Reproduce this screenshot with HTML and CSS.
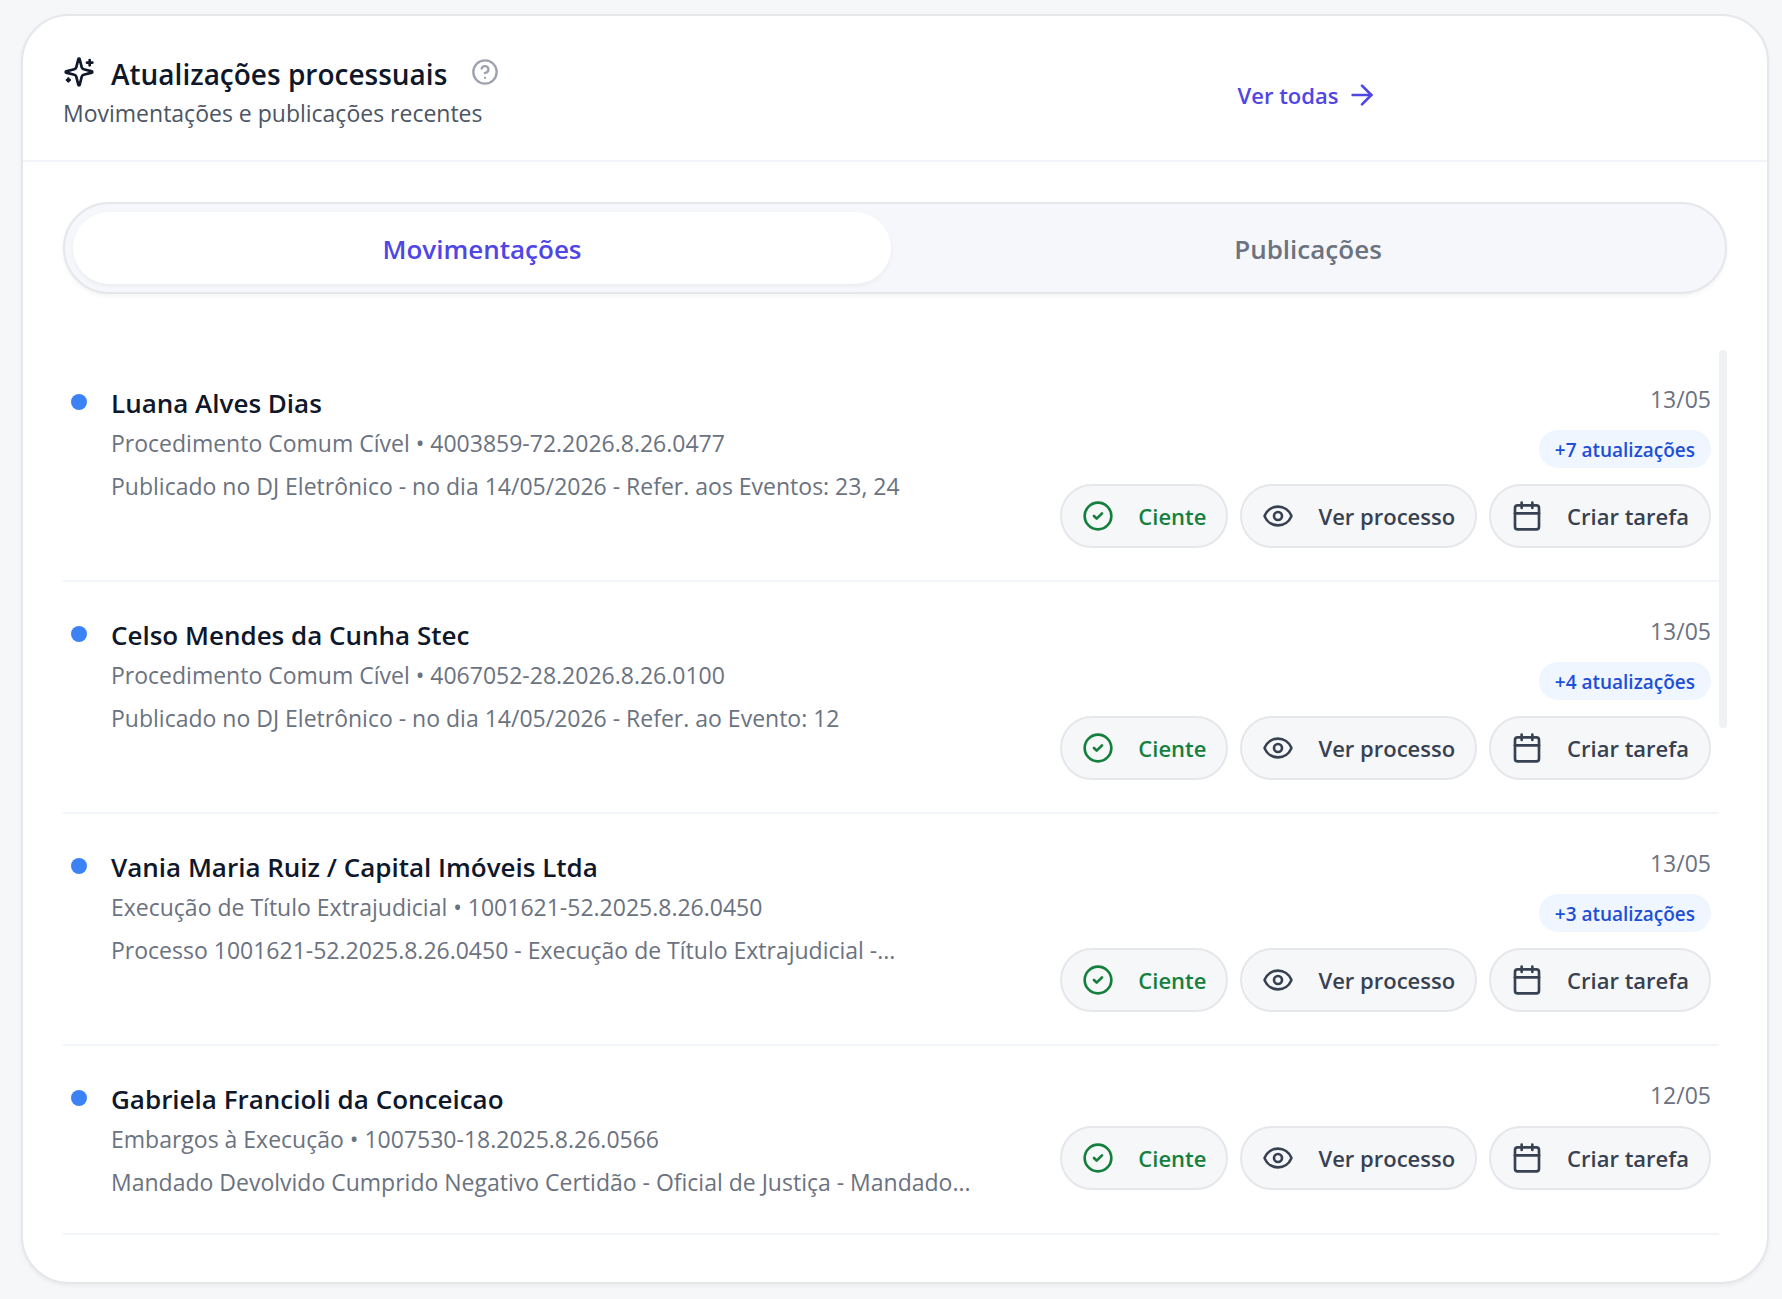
FILE: index.html
```html
<!DOCTYPE html>
<html lang="pt-BR">
<head>
  <meta charset="UTF-8">
  <meta name="viewport" content="width=device-width, initial-scale=1.0">
  <title>Atualizações processuais</title>
  <link rel="stylesheet" href="styles.css">
</head>
<body>
  <!-- Shared icons -->
  <svg class="sprite" aria-hidden="true">
    <symbol id="icon-check" viewBox="0 0 24 24">
      <circle cx="12" cy="12" r="10"/>
      <path d="m9 12 2 2 4-4"/>
    </symbol>
    <symbol id="icon-eye" viewBox="0 0 24 24">
      <path d="M2.062 12.348a1 1 0 0 1 0-.696 10.75 10.75 0 0 1 19.876 0 1 1 0 0 1 0 .696 10.75 10.75 0 0 1-19.876 0"/>
      <circle cx="12" cy="12" r="3"/>
    </symbol>
    <symbol id="icon-calendar" viewBox="0 0 24 24">
      <path d="M8 2v4"/>
      <path d="M16 2v4"/>
      <rect x="3" y="4" width="18" height="18" rx="2"/>
      <path d="M3 10h18"/>
    </symbol>
  </svg>

  <main class="card">
    <header class="card-header">
      <div>
        <div class="title-row">
          <svg class="icon" viewBox="0 0 24 24" aria-hidden="true">
            <path d="M9.937 15.5A2 2 0 0 0 8.5 14.063l-6.135-1.582a.5.5 0 0 1 0-.962L8.5 9.936A2 2 0 0 0 9.937 8.5l1.582-6.135a.5.5 0 0 1 .963 0L14.063 8.5A2 2 0 0 0 15.5 9.937l6.135 1.581a.5.5 0 0 1 0 .964L15.5 14.063a2 2 0 0 0-1.437 1.437l-1.582 6.135a.5.5 0 0 1-.963 0z"/>
            <path d="M20 3v4"/>
            <path d="M22 5h-4"/>
            <path d="M4 17v2"/>
            <path d="M5 18H3"/>
          </svg>
          <h1 class="title">Atualizações processuais</h1>
          <button class="help" type="button" aria-label="Ajuda">
            <svg class="icon icon-small" viewBox="0 0 24 24" aria-hidden="true">
              <circle cx="12" cy="12" r="10"/>
              <path d="M9.09 9a3 3 0 0 1 5.83 1c0 2-3 3-3 3"/>
              <path d="M12 17h.01"/>
            </svg>
          </button>
        </div>
        <p class="subtitle">Movimentações e publicações recentes</p>
      </div>
      <a class="see-all" href="#">
        Ver todas
        <svg class="icon" viewBox="0 0 24 24" aria-hidden="true">
          <path d="M5 12h14"/>
          <path d="m12 5 7 7-7 7"/>
        </svg>
      </a>
    </header>

    <div class="card-body">
      <div class="tabs" role="tablist">
        <button class="tab active" type="button" role="tab" aria-selected="true">Movimentações</button>
        <button class="tab" type="button" role="tab" aria-selected="false">Publicações</button>
      </div>

      <div class="scroll-area">
        <ul class="list">
          <li class="item">
            <span class="dot"></span>
            <div class="info">
              <h2 class="name">Luana Alves Dias</h2>
              <p class="meta">Procedimento Comum Cível • 4003859-72.2026.8.26.0477</p>
              <p class="desc">Publicado no DJ Eletrônico - no dia 14/05/2026 - Refer. aos Eventos: 23, 24</p>
            </div>
            <div class="side">
              <span class="date">13/05</span>
              <span class="badge">+7 atualizações</span>
              <div class="actions">
                <button class="action done" type="button"><svg class="icon" aria-hidden="true"><use href="#icon-check"/></svg>Ciente</button>
                <button class="action" type="button"><svg class="icon" aria-hidden="true"><use href="#icon-eye"/></svg>Ver processo</button>
                <button class="action" type="button"><svg class="icon" aria-hidden="true"><use href="#icon-calendar"/></svg>Criar tarefa</button>
              </div>
            </div>
          </li>
          <li class="item">
            <span class="dot"></span>
            <div class="info">
              <h2 class="name">Celso Mendes da Cunha Stec</h2>
              <p class="meta">Procedimento Comum Cível • 4067052-28.2026.8.26.0100</p>
              <p class="desc">Publicado no DJ Eletrônico - no dia 14/05/2026 - Refer. ao Evento: 12</p>
            </div>
            <div class="side">
              <span class="date">13/05</span>
              <span class="badge">+4 atualizações</span>
              <div class="actions">
                <button class="action done" type="button"><svg class="icon" aria-hidden="true"><use href="#icon-check"/></svg>Ciente</button>
                <button class="action" type="button"><svg class="icon" aria-hidden="true"><use href="#icon-eye"/></svg>Ver processo</button>
                <button class="action" type="button"><svg class="icon" aria-hidden="true"><use href="#icon-calendar"/></svg>Criar tarefa</button>
              </div>
            </div>
          </li>
          <li class="item">
            <span class="dot"></span>
            <div class="info">
              <h2 class="name">Vania Maria Ruiz / Capital Imóveis Ltda</h2>
              <p class="meta">Execução de Título Extrajudicial • 1001621-52.2025.8.26.0450</p>
              <p class="desc">Processo 1001621-52.2025.8.26.0450 - Execução de Título Extrajudicial -...</p>
            </div>
            <div class="side">
              <span class="date">13/05</span>
              <span class="badge">+3 atualizações</span>
              <div class="actions">
                <button class="action done" type="button"><svg class="icon" aria-hidden="true"><use href="#icon-check"/></svg>Ciente</button>
                <button class="action" type="button"><svg class="icon" aria-hidden="true"><use href="#icon-eye"/></svg>Ver processo</button>
                <button class="action" type="button"><svg class="icon" aria-hidden="true"><use href="#icon-calendar"/></svg>Criar tarefa</button>
              </div>
            </div>
          </li>
          <li class="item">
            <span class="dot"></span>
            <div class="info">
              <h2 class="name">Gabriela Francioli da Conceicao</h2>
              <p class="meta">Embargos à Execução • 1007530-18.2025.8.26.0566</p>
              <p class="desc">Mandado Devolvido Cumprido Negativo Certidão - Oficial de Justiça - Mandado...</p>
            </div>
            <div class="side">
              <span class="date">12/05</span>
              <div class="actions">
                <button class="action done" type="button"><svg class="icon" aria-hidden="true"><use href="#icon-check"/></svg>Ciente</button>
                <button class="action" type="button"><svg class="icon" aria-hidden="true"><use href="#icon-eye"/></svg>Ver processo</button>
                <button class="action" type="button"><svg class="icon" aria-hidden="true"><use href="#icon-calendar"/></svg>Criar tarefa</button>
              </div>
            </div>
          </li>
        </ul>
        <div class="scrollbar"><div class="scrollbar-thumb"></div></div>
      </div>
    </div>
  </main>
</body>
</html>
```

FILE: styles.css
```css
* {
  box-sizing: border-box;
}
body {
  margin: 0;
  padding: 14px 13px 15px 21px;
  background: #f6f7f9;
  color: #0f172a;
  font-family: "Segoe UI", "Open Sans", "Noto Sans", sans-serif;
  font-size: 23px;
  line-height: 34px;
}
h1,
h2,
p,
ul {
  margin: 0;
  padding: 0;
}
button {
  font: inherit;
  cursor: pointer;
}
.sprite {
  display: none;
}
.icon {
  width: 32px;
  height: 32px;
  flex-shrink: 0;
  fill: none;
  stroke: currentColor;
  stroke-width: 2;
  stroke-linecap: round;
  stroke-linejoin: round;
}
.icon-small {
  width: 28px;
  height: 28px;
}

.card {
  background: #fff;
  border: 2px solid #e5e7eb;
  border-radius: 48px;
  box-shadow: 0 2px 4px rgba(0, 0, 0, 0.05);
}
.card-header {
  display: grid;
  grid-template-columns: 12fr 5fr;
  padding: 32px 40px 30px;
  border-bottom: 2px solid #f1f5f9;
}
.title-row {
  display: flex;
  align-items: center;
  gap: 16px;
}
.title {
  padding-top: 4px;
  font-size: 28px;
  font-weight: 600;
  line-height: 44px;
}
.help {
  display: flex;
  margin-left: 8px;
  padding: 0;
  border: 0;
  background: none;
  color: #9ca3af;
}
.subtitle {
  color: #4b5563;
}
.see-all {
  display: flex;
  align-items: center;
  gap: 8px;
  padding-top: 12px;
  color: #4f46e5;
  font-size: 22px;
  font-weight: 600;
  text-decoration: none;
}

.card-body {
  padding: 40px 40px 47px;
}
.tabs {
  display: flex;
  gap: 8px;
  padding: 8px;
  border: 2px solid #e5e7eb;
  border-radius: 46px;
  background: #f5f7fb;
  box-shadow: 0 2px 4px rgba(0, 0, 0, 0.05);
}
.tab {
  flex: 1;
  height: 72px;
  padding: 2px 0 0;
  border: 0;
  border-radius: 36px;
  background: transparent;
  color: #6b7280;
  font-size: 26px;
  font-weight: 600;
}
.tab.active {
  background: #fff;
  color: #4f46e5;
  box-shadow: 0 2px 4px rgba(0, 0, 0, 0.05);
}

.scroll-area {
  display: flex;
  margin-top: 56px;
}
.scrollbar {
  width: 8px;
}
.scrollbar-thumb {
  height: 378px;
  border-radius: 4px;
  background: #f0f1f3;
}
.list {
  flex: 1;
  min-width: 0;
  list-style: none;
}
.item {
  display: flex;
  padding: 32px 8px;
  border-bottom: 2px solid #f1f5f9;
}
.dot {
  flex-shrink: 0;
  width: 16px;
  height: 16px;
  margin: 12px 24px 0 0;
  border-radius: 50%;
  background: #3b82f6;
}
.info {
  flex: 1;
  min-width: 0;
  padding-bottom: 2px;
}
.name {
  font-size: 26px;
  font-weight: 600;
  line-height: 42px;
}
.meta,
.desc {
  overflow: hidden;
  color: #6b7280;
  text-overflow: ellipsis;
  white-space: nowrap;
}
.meta {
  margin-top: 2px;
}
.desc {
  margin-top: 9px;
}
.side {
  display: flex;
  flex-direction: column;
  align-items: flex-end;
}
.date {
  color: #6b7280;
}
.badge {
  margin-top: 14px;
  padding: 2px 16px 0;
  border-radius: 19px;
  background: #eff6ff;
  color: #1d4ed8;
  font-size: 19px;
  font-weight: 600;
  line-height: 36px;
}
.actions {
  display: flex;
  gap: 12px;
  margin-top: 14px;
}
.badge + .actions {
  margin-top: 16px;
}
.action {
  display: flex;
  align-items: center;
  gap: 24px;
  height: 64px;
  padding: 0 20px;
  border: 2px solid #e5e7eb;
  border-radius: 32px;
  background: #f6f7f9;
  color: #374151;
  font-size: 22px;
  font-weight: 600;
  white-space: nowrap;
}
.action.done {
  color: #15803d;
}
```
